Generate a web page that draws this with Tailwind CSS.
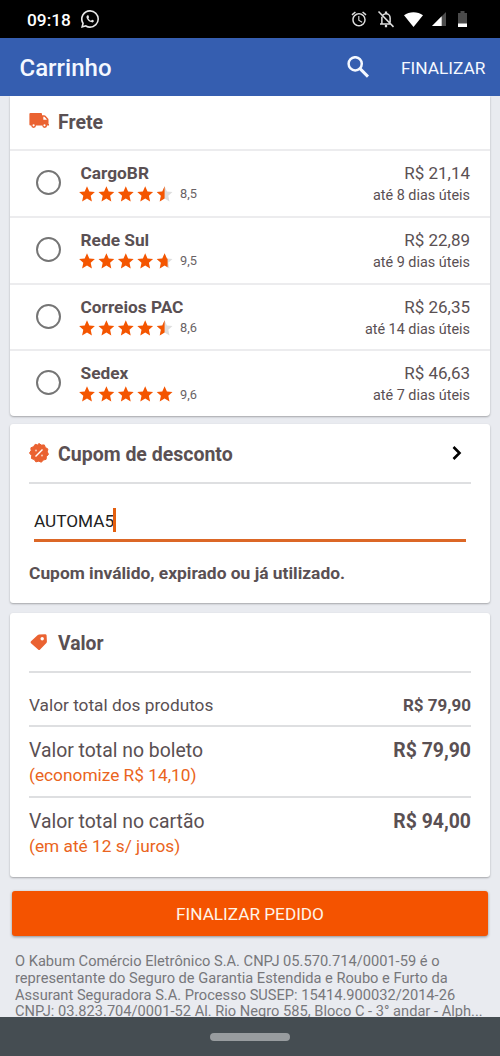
<!DOCTYPE html>
<html lang="pt-BR">
<head>
<meta charset="utf-8">
<title>Carrinho</title>
<script src="https://cdn.jsdelivr.net/npm/@tailwindcss/browser@4"></script>
</head>
<body class="font-['Roboto','Liberation_Sans',sans-serif] bg-[#e9ebf0] text-[#5a5053]">
<svg class="hidden">
  <defs>
    <path id="star" d="M8 .2l2.300 5.400 5.600.5-4.200 3.700 1.200 5.700L8 12.500l-4.900 3 1.200-5.700L.1 6.100l5.600-.5z"/>
    <g id="stars4"><use href="#star"/><use href="#star" x="19.400"/><use href="#star" x="38.800"/><use href="#star" x="58.200"/></g>
  </defs>
</svg>
<div class="flex h-[1056px] w-[500px] flex-col overflow-hidden">
  <!-- status bar -->
  <div class="flex h-[38px] shrink-0 items-center bg-black pl-[27px] text-white">
    <span class="w-[44px] pt-[2px] text-[17.300px] font-medium leading-[36px] whitespace-nowrap">09:18</span>
    <svg class="ml-[10px] size-[18px]" viewBox="0 0 24 24" fill="#e8e8e8"><path d="M16.750 13.960c.250.130.410.200.460.300.060.110.040.610-.210 1.180-.200.560-1.240 1.100-1.700 1.120-.460.020-.470.360-2.960-.730-2.490-1.090-3.990-3.750-4.110-3.920-.120-.170-.960-1.380-.920-2.610.050-1.220.690-1.800.950-2.040.240-.260.510-.290.680-.260h.470c.150 0 .360-.060.550.450l.690 1.870c.060.130.100.280.010.440l-.270.410-.390.420c-.120.120-.260.250-.120.500.120.260.620 1.090 1.320 1.780.910.880 1.710 1.170 1.950 1.300.240.140.390.120.540-.040l.810-.940c.190-.250.350-.190.580-.110l1.670.880M12 0a12 12 0 0 1 0 24c-2.200 0-4.260-.590-6.030-1.630L0 24l1.630-5.970A12 12 0 0 1 12 0m0 2.200A9.800 9.800 0 0 0 3.900 17.500l-.900 3.500 3.500-.900A9.800 9.800 0 1 0 12 2.200z"/></svg>
    <svg class="ml-[251px] size-[18px] shrink-0" viewBox="0 0 24 24" fill="#dedede"><path d="M22 5.720l-4.600-3.860-1.290 1.530 4.600 3.860L22 5.720zM7.880 3.390L6.600 1.860 2 5.710l1.290 1.530 4.590-3.850zM12.500 8H11v6l4.750 2.850.750-1.230-4-2.370V8zM12 4c-4.970 0-9 4.030-9 9s4.020 9 9 9a9 9 0 0 0 0-18zm0 16c-3.870 0-7-3.130-7-7s3.130-7 7-7 7 3.130 7 7-3.130 7-7 7z"/></svg>
    <svg class="ml-[9px] size-[18px] shrink-0" viewBox="0 0 24 24" fill="none" stroke="#dedede" stroke-width="2"><path d="M2 2l20 20.500M6.500 9v9.500M4 18.500h14M8 6.800C9 5.600 10.400 5 12 5c3.200 0 5.500 2.500 5.500 5.500v6"/><path d="M12 2v3M10.500 21.500h3" stroke-width="3"/></svg>
    <svg class="ml-[9px] h-[15px] w-[19px] shrink-0" viewBox="0 0 19 15" fill="#fff"><path d="M0 3.200C5.200-.9 13.800-.9 19 3.200L9.500 15z"/></svg>
    <svg class="ml-[9px] h-[14px] w-[14px] shrink-0" viewBox="0 0 14 14"><path d="M14 0v14H0z" fill="#4c4c4c"/><path d="M9.700 4.300V14H0z" fill="#fff"/></svg>
    <svg class="ml-[12px] h-[16px] w-[9px] shrink-0" viewBox="0 0 9 16"><path d="M0 2h2.500V0h4v2H9v14H0z" fill="#4a4a4a"/><path d="M0 12.500h9V16H0z" fill="#fff"/></svg>
  </div>
  <!-- toolbar -->
  <div class="flex h-[58px] shrink-0 items-center bg-[#355eb0] pl-[19.500px] text-[#f4f8ff]">
    <h1 class="flex-1 text-[24px] font-medium leading-[58px] pt-[2px]">Carrinho</h1>
    <svg class="mr-[32.500px] size-[22px]" viewBox="0 0 22 22" fill="none" stroke="#f4f8ff" stroke-width="2.500"><circle cx="8.200" cy="7.800" r="6.600"/><path d="M13 12.600l8 8" stroke-width="3"/></svg>
    <span class="w-[99px] text-[17.300px] leading-[58px] pt-[2px] whitespace-nowrap">FINALIZAR</span>
  </div>
  <main class="flex h-[921px] shrink-0 flex-col overflow-hidden">
    <!-- frete -->
    <section class="mx-2.5 h-[320px] shrink-0 rounded-b bg-white shadow-[0_1px_2px_rgba(0,0,0,0.3)]">
      <div class="flex h-[53px] items-center pl-[19px]">
        <svg class="h-[16px] w-[20px] -mt-[5px]" viewBox="0 0 20 16"><path d="M1.500 1h10.500q1 0 1 1v1.300h2.300q.7 0 1.200.5l2.500 2.700q.5.500.5 1.200v4.300h.5v1.600h-1.900a2.400 2.400 0 0 1-4.800 0H7a2.400 2.400 0 0 1-4.800 0h-.7q-1.100 0-1.100-1V2q0-1 1.100-1z" fill="#ea6231"/><path d="M14.300 4.700h1.100l2.300 2.600v.5h-3.400z" fill="#fff"/><circle cx="4.600" cy="13.300" r="1.100" fill="#fff"/><circle cx="15.500" cy="13.300" r="1.100" fill="#fff"/></svg>
        <h2 class="ml-[9px] text-[19.500px] font-bold">Frete</h2>
      </div>
      <div class="grid grid-rows-4 h-[267px]">
        <div class="flex border-t-2 border-[#ececee] px-[20px]">
          <span class="mt-[19px] ml-[6px] size-[25px] rounded-full border-[2.500px] border-[#757575]"></span>
          <div class="ml-[19.500px] flex-1"><div class="mt-[11px] h-[23px] text-[17.300px] font-bold leading-[22px]">CargoBR</div>
            <div class="flex h-[18px] items-center"><svg class="-ml-[1.500px] h-[16px] w-[94px]" viewBox="0 0 94 16" fill="#f45500"><use href="#stars4"/><use href="#star" x="77.600" fill="#dedede"/><svg x="77.600" width="8" height="16"><use href="#star"/></svg></svg><span class="ml-[7px] text-[12.800px] text-[#6a6265]">8,5</span></div></div>
          <div class="text-right whitespace-nowrap"><div class="mt-[11px] h-[23px] text-[17px] leading-[22px]">R$ 21,14</div><div class="text-[14.400px] leading-[21px]">até 8 dias úteis</div></div>
        </div>
        <div class="flex border-t-2 border-[#ececee] px-[20px]">
          <span class="mt-[19px] ml-[6px] size-[25px] rounded-full border-[2.500px] border-[#757575]"></span>
          <div class="ml-[19.500px] flex-1"><div class="mt-[11px] h-[23px] text-[17.300px] font-bold leading-[22px]">Rede Sul</div>
            <div class="flex h-[18px] items-center"><svg class="-ml-[1.500px] h-[16px] w-[94px]" viewBox="0 0 94 16" fill="#f45500"><use href="#stars4"/><use href="#star" x="77.600" fill="#dedede"/><svg x="77.600" width="11" height="16"><use href="#star"/></svg></svg><span class="ml-[7px] text-[12.800px] text-[#6a6265]">9,5</span></div></div>
          <div class="text-right whitespace-nowrap"><div class="mt-[11px] h-[23px] text-[17px] leading-[22px]">R$ 22,89</div><div class="text-[14.400px] leading-[21px]">até 9 dias úteis</div></div>
        </div>
        <div class="flex border-t-2 border-[#ececee] px-[20px]">
          <span class="mt-[19px] ml-[6px] size-[25px] rounded-full border-[2.500px] border-[#757575]"></span>
          <div class="ml-[19.500px] flex-1"><div class="mt-[11px] h-[23px] text-[17.300px] font-bold leading-[22px]">Correios PAC</div>
            <div class="flex h-[18px] items-center"><svg class="-ml-[1.500px] h-[16px] w-[94px]" viewBox="0 0 94 16" fill="#f45500"><use href="#stars4"/><use href="#star" x="77.600" fill="#dedede"/><svg x="77.600" width="8" height="16"><use href="#star"/></svg></svg><span class="ml-[7px] text-[12.800px] text-[#6a6265]">8,6</span></div></div>
          <div class="text-right whitespace-nowrap"><div class="mt-[11px] h-[23px] text-[17px] leading-[22px]">R$ 26,35</div><div class="text-[14.400px] leading-[21px]">até 14 dias úteis</div></div>
        </div>
        <div class="flex border-t-2 border-[#ececee] px-[20px]">
          <span class="mt-[19px] ml-[6px] size-[25px] rounded-full border-[2.500px] border-[#757575]"></span>
          <div class="ml-[19.500px] flex-1"><div class="mt-[11px] h-[23px] text-[17.300px] font-bold leading-[22px]">Sedex</div>
            <div class="flex h-[18px] items-center"><svg class="-ml-[1.500px] h-[16px] w-[94px]" viewBox="0 0 94 16" fill="#f45500"><use href="#stars4"/><use href="#star" x="77.600"/></svg><span class="ml-[7px] text-[12.800px] text-[#6a6265]">9,6</span></div></div>
          <div class="text-right whitespace-nowrap"><div class="mt-[11px] h-[23px] text-[17px] leading-[22px]">R$ 46,63</div><div class="text-[14.400px] leading-[21px]">até 7 dias úteis</div></div>
        </div>
      </div>
    </section>
    <!-- cupom -->
    <section class="mx-2.5 mt-2 h-[179px] shrink-0 rounded-[3px] bg-white px-[19px] shadow-[0_1px_2px_rgba(0,0,0,0.3)]">
      <div class="flex h-[60px] items-center border-b-2 border-[#dedfe1]">
        <svg class="size-[20px]" viewBox="0 0 20 20"><path d="M10 .5l2.400 1.600 2.900-.2 1.100 2.600 2.500 1.500-.6 2.800 1.200 2.600-2.100 2-.3 2.900-2.800.7-1.900 2.200-2.700-1-2.800.7-1.700-2.400-2.700-1 .2-2.900L.5 10l1.600-2.300-.2-2.900 2.600-1.100L6.200 1.300l2.300.6z" fill="#ea6231" stroke="#ea6231" stroke-linejoin="round"/><path d="M6.500 13.500l7-7" stroke="#fff" stroke-width="1.500"/><circle cx="7" cy="7.500" r="1.100" fill="#fff" opacity=".6"/><circle cx="13" cy="12.500" r="1.100" fill="#fff" opacity=".6"/></svg>
        <h2 class="ml-[9px] flex-1 pt-[4px] text-[19.500px] font-bold">Cupom de desconto</h2>
        <svg class="mr-[9px] h-[14px] w-[10px]" viewBox="0 0 10 14" fill="none" stroke="#000" stroke-width="2.600"><path d="M1.500 1l6 6-6 6"/></svg>
      </div>
      <div class="mx-[5px] flex h-[58px] items-end border-b-[3px] border-[#dc6726] pb-[7px]">
        <span class="text-[17.200px] leading-[22px] text-[#222]">AUTOMA5</span><span class="h-[24px] w-[3px] -ml-px bg-[#e4600f]"></span>
      </div>
      <p class="mt-[19px] text-[17.400px] font-bold leading-[24px] whitespace-nowrap">Cupom inválido, expirado ou já utilizado.</p>
    </section>
    <!-- valor -->
    <section class="mx-2.5 mt-[10px] h-[264px] shrink-0 rounded-[3px] bg-white px-[19px] shadow-[0_1px_2px_rgba(0,0,0,0.3)]">
      <div class="flex h-[60px] items-center border-b-2 border-[#dedfe1]">
        <svg class="ml-[1px] h-[18px] w-[18px]" viewBox="0 0 18 18"><path d="M1 8.200L7.800 1.900q.6-.5 1.300-.5l6-.2q1.400 0 1.500 1.400l.3 6q0 .8-.5 1.400l-6.300 6.600q-1 1-2 0L1 10.200q-1-1 0-2z" fill="#ea6231"/><circle cx="12.200" cy="5.700" r="1.700" fill="#fff"/></svg>
        <h2 class="ml-[10px] pt-[4px] text-[19.300px] font-bold">Valor</h2>
      </div>
      <div class="flex h-[54px] justify-between border-b-2 border-[#dedfe1] pt-[20px] text-[17.250px] leading-[24px]"><span>Valor total dos produtos</span><span class="text-[17px] font-bold">R$ 79,90</span></div>
      <div class="h-[71px] border-b-2 border-[#dedfe1] pt-[11px]">
        <div class="flex justify-between text-[19.400px] leading-[26px]"><span>Valor total no boleto</span><span class="font-bold">R$ 79,90</span></div>
        <div class="text-[17.300px] leading-[23px] text-[#ea6420]">(economize R$ 14,10)</div>
      </div>
      <div class="pt-[11px]">
        <div class="flex justify-between text-[19.400px] leading-[26px]"><span>Valor total no cartão</span><span class="font-bold">R$ 94,00</span></div>
        <div class="text-[17.300px] leading-[23px] text-[#ea6420]">(em até 12 s/ juros)</div>
      </div>
    </section>
    <button class="mx-[12px] mt-[14px] h-[45px] shrink-0 rounded-[3px] bg-[#f45300] pt-[2px] text-[17.200px] text-[#fff4e8] shadow-[0_1px_3px_rgba(0,0,0,0.4)]">FINALIZAR PEDIDO</button>
    <p class="ml-[15px] mt-[17px] text-[14.650px] leading-[16.800px] whitespace-nowrap text-[#77777b]">O Kabum Comércio Eletrônico S.A. CNPJ 05.570.714/0001-59 é o<br>representante do Seguro de Garantia Estendida e Roubo e Furto da<br>Assurant Seguradora S.A. Processo SUSEP: 15414.900032/2014-26<br>CNPJ: 03.823.704/0001-52 Al. Rio Negro 585, Bloco C - 3° andar - Alph...</p>
  </main>
  <!-- navigation bar -->
  <div class="flex h-[39px] shrink-0 items-center justify-center bg-[#454d52]"><span class="h-[8px] w-[80px] rounded-full bg-[#989c9f]"></span></div>
</div>
</body>
</html>
